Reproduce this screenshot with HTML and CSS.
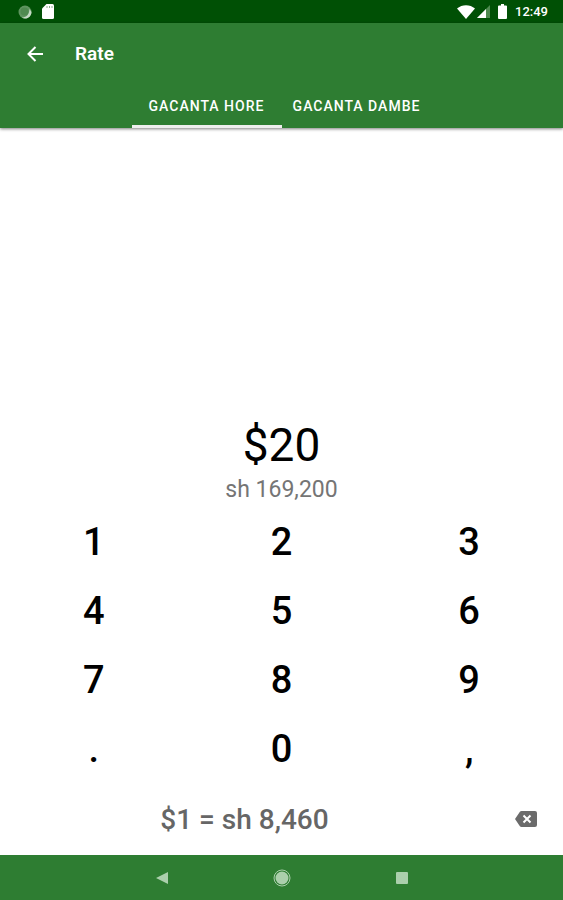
FILE: index.html
```html
<!DOCTYPE html>
<html lang="so">
<head>
    <meta charset="UTF-8">
    <meta name="viewport" content="width=device-width, initial-scale=1.0">
    <title>Rate</title>
    <link rel="stylesheet" href="styles.css">
</head>
<body>

    <!-- Status Bar -->
    <div class="status-bar">
        <div class="status-group">
            <svg width="14" height="14" viewBox="0 0 14 14">
                <circle cx="7" cy="7" r="6.500" fill="#5f9560"/>
                <path d="M13.500 7a6.500 6.500 0 0 1-10 5.500c4.500 0 7.500-2 8-8.500z" fill="#c5dac5"/>
                <circle cx="6.500" cy="6.500" r="4" fill="#4f8a50"/>
            </svg>
            <svg width="12" height="15" viewBox="0 0 12 15">
                <path d="M4.500 0H10.500a1.500 1.500 0 0 1 1.500 1.500v12a1.500 1.500 0 0 1-1.500 1.500h-9A1.500 1.500 0 0 1 0 13.500V4.500z" fill="#fff"/>
                <path d="M5 2v2M7.500 2v2M10 2v2" stroke="#8fb08f"/>
            </svg>
        </div>
        <div class="status-group status-right">
            <svg width="18" height="14" viewBox="0 0 18 14">
                <path d="M9 14L0 3.500C5 -1 13 -1 18 3.500z" fill="#fff"/>
            </svg>
            <svg class="signal" width="13" height="13" viewBox="0 0 13 13">
                <path d="M13 0v13H0z" fill="#4f8a50"/>
                <path d="M9 4v9H0z" fill="#fff"/>
            </svg>
            <svg class="battery" width="9" height="15" viewBox="0 0 9 15">
                <path d="M3 0h3v1.500h2a1 1 0 0 1 1 1V14a1 1 0 0 1-1 1H1a1 1 0 0 1-1-1V2.500a1 1 0 0 1 1-1h2z" fill="#fff"/>
            </svg>
            <span class="clock">12:49</span>
        </div>
    </div>

    <!-- App Bar -->
    <header class="app-bar">
        <div class="toolbar">
            <button class="icon-btn" aria-label="Back">
                <svg width="16" height="16" viewBox="0 0 16 16" fill="none" stroke="#fff" stroke-width="2">
                    <path d="M16 8H2M8.500 1L1.500 8l7 7"/>
                </svg>
            </button>
            <h1>Rate</h1>
        </div>
        <nav class="tabs">
            <button class="tab active">GACANTA HORE</button>
            <button class="tab">GACANTA DAMBE</button>
        </nav>
    </header>

    <!-- Amount and Keypad -->
    <main class="content">
        <div class="amount">$20</div>
        <div class="converted">sh 169,200</div>

        <div class="keypad">
            <button>1</button>
            <button>2</button>
            <button>3</button>
            <button>4</button>
            <button>5</button>
            <button>6</button>
            <button>7</button>
            <button>8</button>
            <button>9</button>
            <button>.</button>
            <button>0</button>
            <button>,</button>
        </div>

        <div class="rate-row">
            <div class="rate">$1 = sh 8,460</div>
            <button class="delete-btn" aria-label="Delete">
                <svg width="22" height="16" viewBox="0 0 22 16">
                    <path d="M6.500 0H20a2 2 0 0 1 2 2v12a2 2 0 0 1-2 2H6.500a2 2 0 0 1-1.600-.8L0 8 4.900.8A2 2 0 0 1 6.500 0z" fill="#6b6b6b"/>
                    <path d="M8.500 4.500l7 7M15.500 4.500l-7 7" stroke="#fff" stroke-width="2"/>
                </svg>
            </button>
        </div>
    </main>

    <!-- System Navigation -->
    <footer class="nav-bar">
        <button aria-label="Back">
            <svg width="12" height="14" viewBox="0 0 12 14"><path d="M12 1v12L0 7z" fill="#abcfac"/></svg>
        </button>
        <button aria-label="Home">
            <svg width="18" height="18" viewBox="0 0 18 18">
                <circle cx="9" cy="9" r="8" fill="none" stroke="#abcfac"/>
                <circle cx="9" cy="9" r="6.500" fill="#abcfac"/>
            </svg>
        </button>
        <button aria-label="Overview">
            <svg width="12" height="12" viewBox="0 0 12 12"><rect width="12" height="12" rx="1" fill="#abcfac"/></svg>
        </button>
    </footer>

</body>
</html>
```
FILE: styles.css
```css
* {
    box-sizing: border-box;
}

body {
    font-family: Roboto, sans-serif;
    background-color: #fff;
    margin: 0;
    min-height: 100vh;
    display: flex;
    flex-direction: column;
    color: #000;
}

button {
    background: none;
    border: none;
    padding: 0;
    color: inherit;
    font-family: inherit;
    cursor: pointer;
}

svg {
    display: block;
}

.status-bar {
    background-color: #005005;
    height: 23px;
    padding: 0 15px 0 18px;
    display: flex;
    justify-content: space-between;
    align-items: center;
    color: #fff;
}

.status-group {
    display: flex;
    align-items: center;
    gap: 10px;
}

.status-right {
    gap: 2px;
}

.battery {
    margin: 0 6px;
}

.clock {
    font-size: 13px;
    font-weight: 500;
    line-height: 16px;
}

.app-bar {
    background-color: #2e7d32;
    color: #fff;
    box-shadow: 0 1px 3px rgba(0, 0, 0, 0.5);
}

.toolbar {
    display: flex;
    align-items: center;
    height: 61px;
    padding-left: 16px;
    gap: 22px;
}

.icon-btn {
    width: 37px;
    height: 37px;
    display: flex;
    justify-content: center;
    align-items: center;
}

h1 {
    font-size: 19px;
    font-weight: 600;
    margin: 0;
}

.tabs {
    display: flex;
    justify-content: center;
}

.tab {
    width: 150px;
    height: 44px;
    border-top: 3px solid transparent;
    border-bottom: 3px solid transparent;
    font-size: 14px;
    font-weight: 500;
    letter-spacing: 1px;
    white-space: nowrap;
}

.tab.active {
    border-bottom-color: #eee;
}

.content {
    flex: 1;
    display: flex;
    flex-direction: column;
    justify-content: flex-end;
    text-align: center;
}

.amount {
    font-size: 46px;
    line-height: 56px;
}

.converted {
    font-size: 23px;
    line-height: 34px;
    color: #757575;
}

.keypad {
    display: grid;
    grid-template-columns: repeat(3, 1fr);
    grid-auto-rows: 69px;
}

.keypad button {
    font-size: 38px;
    font-weight: 500;
}

.rate-row {
    display: flex;
    align-items: center;
    height: 72px;
}

.rate {
    flex: 1;
    font-size: 28px;
    font-weight: 500;
    color: #666;
}

.delete-btn {
    width: 74px;
    height: 48px;
    display: flex;
    justify-content: center;
    align-items: center;
}

.nav-bar {
    background-color: #2e7d32;
    height: 45px;
    display: flex;
    justify-content: center;
}

.nav-bar button {
    width: 120px;
    display: flex;
    justify-content: center;
    align-items: center;
}
```
